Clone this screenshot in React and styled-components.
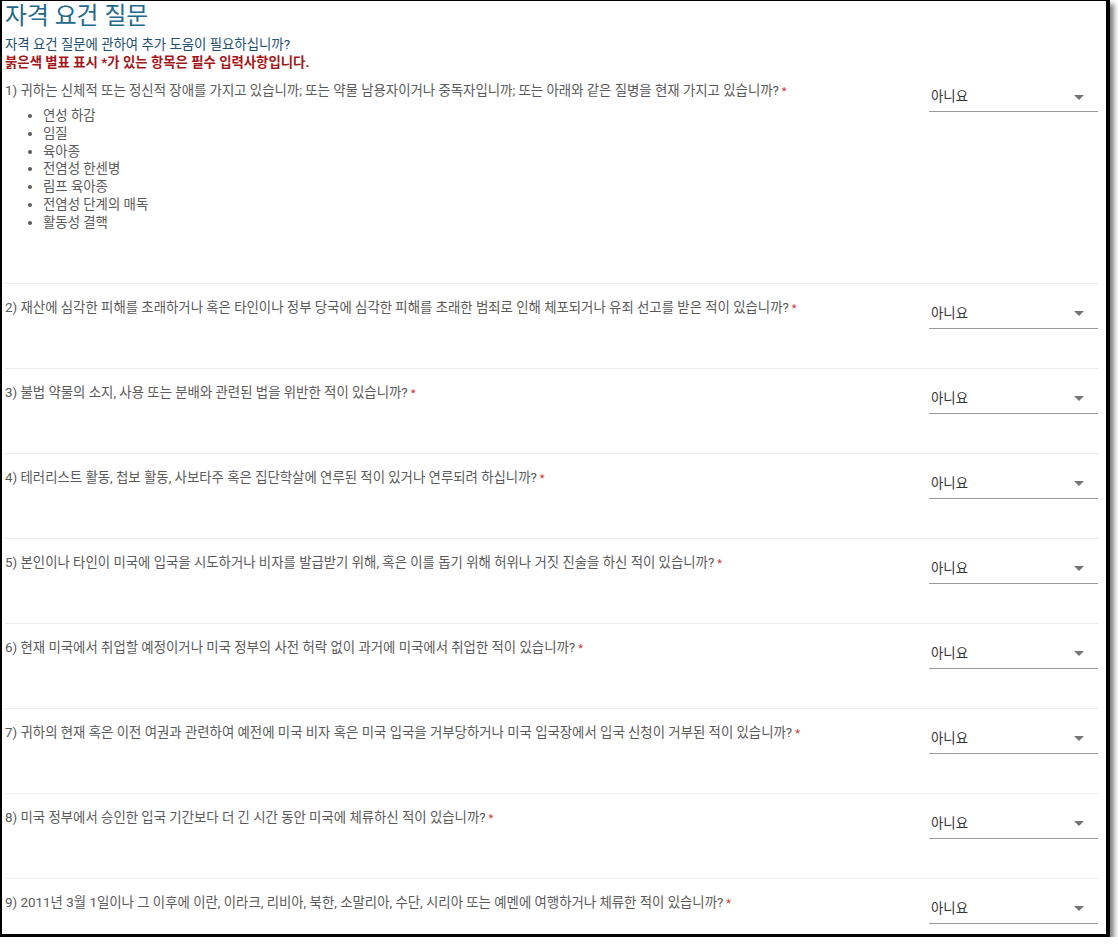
import React from 'react';
import styled, { createGlobalStyle } from 'styled-components';

const GlobalStyle = createGlobalStyle`
    html, body {
        margin: 0;
        padding: 0;
        background: #ffffff;
    }
    body {
        font-family: Roboto, "Noto Sans CJK KR", "Noto Sans", sans-serif;
    }
`;

const Frame = styled.div`
    width: 1104px;
    height: 933px;
    border-style: solid;
    border-color: #000;
    border-width: 1px 4px 3px 2px;
    box-shadow: 4px 4px 5px rgba(0, 0, 0, 0.5);
    overflow: hidden;
    background: #fff;
`;

const Content = styled.div`
    padding: 0 8px 0 3px;
`;

const Title = styled.h1`
    margin: 0;
    font-size: 23.8px;
    line-height: 30px;
    font-weight: 400;
    color: #22698c;
`;

const Help = styled.div`
    margin-top: 5px;
    font-size: 13.4px;
    line-height: 18px;
    color: #23506e;
`;

const Required = styled.div`
    font-size: 13.4px;
    line-height: 18px;
    font-weight: 700;
    color: #a3161a;
`;

const Row = styled.div`
    display: flex;
    align-items: flex-start;
    justify-content: space-between;
    gap: 20px;
    border-top: ${(p) => (p.$first ? 'none' : '1px solid #ececec')};
    padding-top: ${(p) => (p.$first ? '10px' : '15px')};
    padding-bottom: ${(p) => (p.$first ? '51px' : '39px')};
`;

const Question = styled.div`
    flex: 1;
    font-size: 13.4px;
    line-height: 18px;
    color: #5a5a5a;
`;

const Star = styled.span`
    color: #d0312d;
    font-size: 11px;
    margin-left: 3px;
`;

const Diseases = styled.ul`
    margin: 6px 0 0;
    padding-left: 38px;
    list-style: disc;

    li {
        line-height: 17.8px;
    }
`;

const Select = styled.div`
    width: 169px;
    margin-top: 6px;
    padding: 0 0 5px 2px;
    box-sizing: border-box;
    display: flex;
    align-items: center;
    justify-content: space-between;
    border-bottom: 1px solid #9a9a9a;
    font-size: 13.4px;
    line-height: 18px;
    color: #333;
`;

const Arrow = styled.span`
    width: 0;
    height: 0;
    margin-right: 14px;
    border-left: 5px solid transparent;
    border-right: 5px solid transparent;
    border-top: 5px solid #757575;
`;

const questions = [
    '귀하는 신체적 또는 정신적 장애를 가지고 있습니까; 또는 약물 남용자이거나 중독자입니까; 또는 아래와 같은 질병을 현재 가지고 있습니까?',
    '재산에 심각한 피해를 초래하거나 혹은 타인이나 정부 당국에 심각한 피해를 초래한 범죄로 인해 체포되거나 유죄 선고를 받은 적이 있습니까?',
    '불법 약물의 소지, 사용 또는 분배와 관련된 법을 위반한 적이 있습니까?',
    '테러리스트 활동, 첩보 활동, 사보타주 혹은 집단학살에 연루된 적이 있거나 연루되려 하십니까?',
    '본인이나 타인이 미국에 입국을 시도하거나 비자를 발급받기 위해, 혹은 이를 돕기 위해 허위나 거짓 진술을 하신 적이 있습니까?',
    '현재 미국에서 취업할 예정이거나 미국 정부의 사전 허락 없이 과거에 미국에서 취업한 적이 있습니까?',
    '귀하의 현재 혹은 이전 여권과 관련하여 예전에 미국 비자 혹은 미국 입국을 거부당하거나 미국 입국장에서 입국 신청이 거부된 적이 있습니까?',
    '미국 정부에서 승인한 입국 기간보다 더 긴 시간 동안 미국에 체류하신 적이 있습니까?',
    '2011년 3월 1일이나 그 이후에 이란, 이라크, 리비아, 북한, 소말리아, 수단, 시리아 또는 예멘에 여행하거나 체류한 적이 있습니까?',
];

const diseases = ['연성 하감', '임질', '육아종', '전염성 한센병', '림프 육아종', '전염성 단계의 매독', '활동성 결핵'];

const App = () => {
    return (
        <>
            <GlobalStyle />
            <Frame>
                <Content>
                    <Title>자격 요건 질문</Title>
                    <Help>자격 요건 질문에 관하여 추가 도움이 필요하십니까?</Help>
                    <Required>붉은색 별표 표시 *가 있는 항목은 필수 입력사항입니다.</Required>
                    {questions.map((q, i) => (
                        <Row key={i} $first={i === 0}>
                            <Question>
                                {i + 1}) {q}
                                <Star>*</Star>
                                {i === 0 && (
                                    <Diseases>
                                        {diseases.map((d) => (
                                            <li key={d}>{d}</li>
                                        ))}
                                    </Diseases>
                                )}
                            </Question>
                            <Select>
                                <span>아니요</span>
                                <Arrow />
                            </Select>
                        </Row>
                    ))}
                </Content>
            </Frame>
        </>
    );
};

export default App;
